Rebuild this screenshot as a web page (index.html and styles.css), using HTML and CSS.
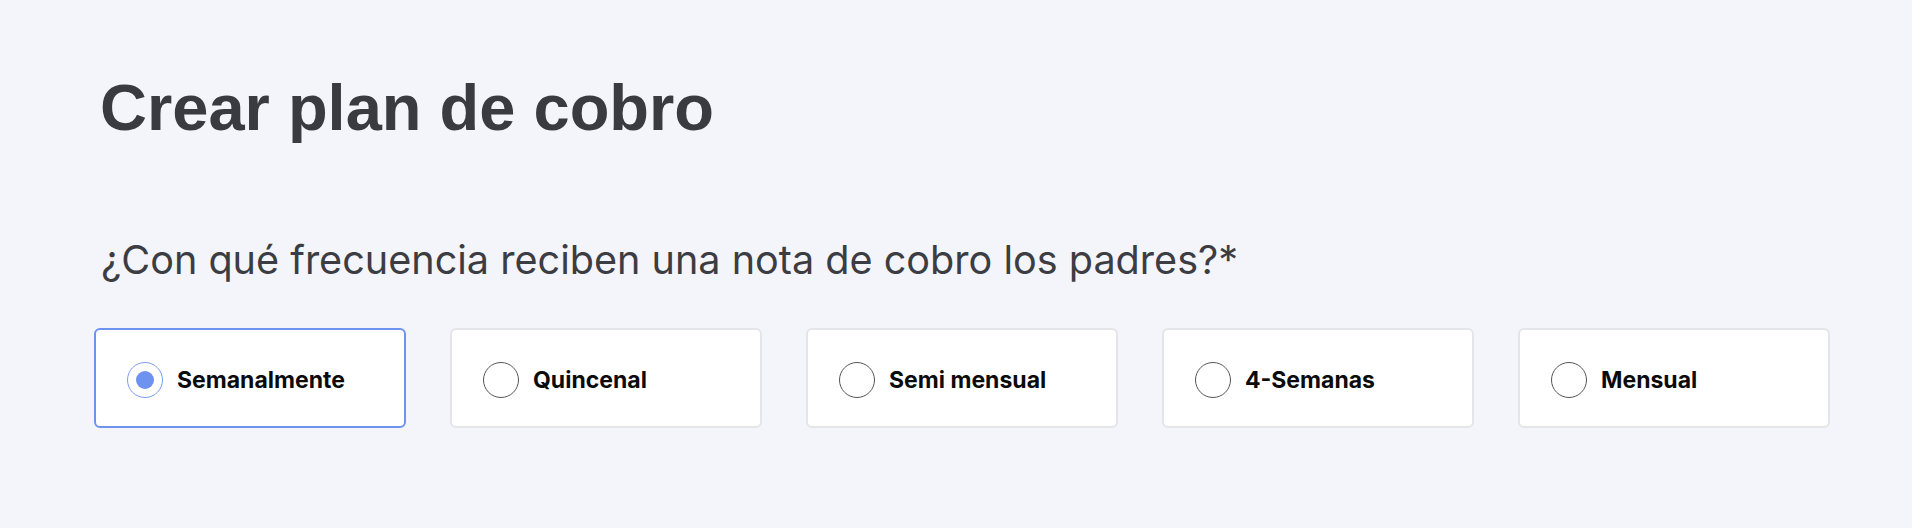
FILE: index.html
```html
<!DOCTYPE html>
<html lang="es">
<head>
<meta charset="utf-8">
<title>Crear plan de cobro</title>
<link rel="stylesheet" href="styles.css">
</head>
<body>
<main class="page">
  <h1 class="title">Crear plan de cobro</h1>
  <p class="question">¿Con qué frecuencia reciben una nota de cobro los padres?*</p>
  <div class="options">
    <label class="option is-selected"><span class="radio"><span class="dot"></span></span><span class="label">Semanalmente</span></label>
    <label class="option"><span class="radio"></span><span class="label">Quincenal</span></label>
    <label class="option"><span class="radio"></span><span class="label">Semi mensual</span></label>
    <label class="option"><span class="radio"></span><span class="label">4-Semanas</span></label>
    <label class="option"><span class="radio"></span><span class="label">Mensual</span></label>
  </div>
</main>
</body>
</html>
```
FILE: styles.css
```css
html, body {
  margin: 0;
  padding: 0;
  background: #f4f5fa;
}
body {
  width: 1912px;
  height: 528px;
  overflow: hidden;
}
.page {
  padding: 75px 0 0 100px;
  display: flex;
  flex-direction: column;
}
.title {
  margin: 0;
  font-family: "Liberation Sans", Arial, sans-serif;
  font-weight: 700;
  font-size: 65px;
  line-height: 65px;
  color: #3a3b41;
}
.question {
  margin: 101px 0 0 1px;
  font-family: Inter, "Open Sans", sans-serif;
  font-weight: 400;
  font-size: 39.6px;
  line-height: 39px;
  color: #3c3d43;
}
.options {
  margin: 48px 0 0 -6px;
  display: flex;
  gap: 44px;
}
.option {
  box-sizing: border-box;
  width: 312px;
  height: 100px;
  background: #ffffff;
  border: 2px solid #e4e5e9;
  border-radius: 6px;
  display: flex;
  align-items: center;
  padding: 4px 0 0 31px;
  gap: 14px;
}
.option.is-selected {
  border-color: #6e92ef;
}
.radio {
  box-sizing: border-box;
  width: 36px;
  height: 36px;
  border-radius: 50%;
  border: 1px solid #555559;
  display: flex;
  align-items: center;
  justify-content: center;
  flex: none;
}
.is-selected .radio {
  border-color: #7b9bf0;
}
.dot {
  width: 18px;
  height: 18px;
  border-radius: 50%;
  background: #6e92ef;
}
.label {
  font-family: Inter, "Open Sans", sans-serif;
  font-weight: 700;
  font-size: 23px;
  color: #0b0b0c;
}
```
